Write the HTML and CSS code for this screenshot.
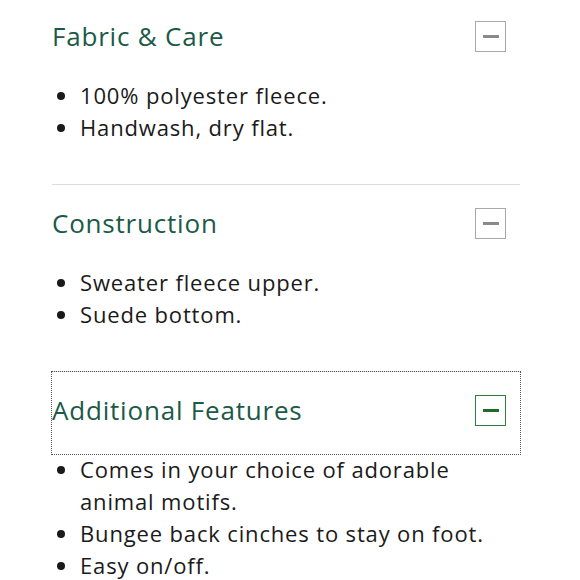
FILE: index.html
```html
<!DOCTYPE html>
<html>
<head>
<meta charset="utf-8">
<link rel="stylesheet" href="styles.css">
</head>
<body>
<div class="accordion">
  <section class="item first">
    <div class="header">
      <h2 class="title">Fabric &amp; Care</h2>
      <span class="toggle"></span>
    </div>
    <ul class="list">
      <li>100% polyester fleece.</li>
      <li>Handwash, dry flat.</li>
    </ul>
  </section>
  <section class="item">
    <div class="header">
      <h2 class="title">Construction</h2>
      <span class="toggle"></span>
    </div>
    <ul class="list">
      <li>Sweater fleece upper.</li>
      <li>Suede bottom.</li>
    </ul>
  </section>
  <section class="item">
    <div class="header focused">
      <h2 class="title">Additional Features</h2>
      <span class="toggle active"></span>
    </div>
    <ul class="list">
      <li>Comes in your choice of adorable animal motifs.</li>
      <li>Bungee back cinches to stay on foot.</li>
      <li>Easy on/off.</li>
    </ul>
  </section>
</div>
</body>
</html>
```
FILE: styles.css
```css
html, body {
  margin: 0;
  padding: 0;
  background: #fff;
}
body {
  font-family: "Open Sans", "Liberation Sans", sans-serif;
  color: #1a1a1a;
}
.accordion {
  margin: -2px 60px 0 52px;
}
.item {
  border-top: 1px solid #dcdcdc;
  padding-bottom: 40px;
}
.item.first {
  border-top: none;
}
.header {
  box-sizing: border-box;
  height: 82px;
  padding-bottom: 6px;
  display: flex;
  align-items: center;
  justify-content: space-between;
}
.header.focused {
  outline: 1px dotted #555;
}
.title {
  margin: 0;
  font-size: 26px;
  font-weight: 400;
  color: #1b5a47;
  letter-spacing: 0.8px;
}
.toggle {
  width: 29px;
  height: 29px;
  border: 1px solid #a8a8a8;
  margin-right: 14px;
  display: flex;
  align-items: center;
  justify-content: center;
}
.toggle::before {
  content: "";
  width: 16px;
  height: 3px;
  background: #8a8a8a;
}
.toggle.active {
  border-color: #2f7d3a;
}
.toggle.active::before {
  background: #1f6b2a;
}
.list {
  margin: -1px 0 1px;
  padding-left: 28px;
  font-size: 22px;
  line-height: 32px;
  letter-spacing: 0.85px;
}
```
